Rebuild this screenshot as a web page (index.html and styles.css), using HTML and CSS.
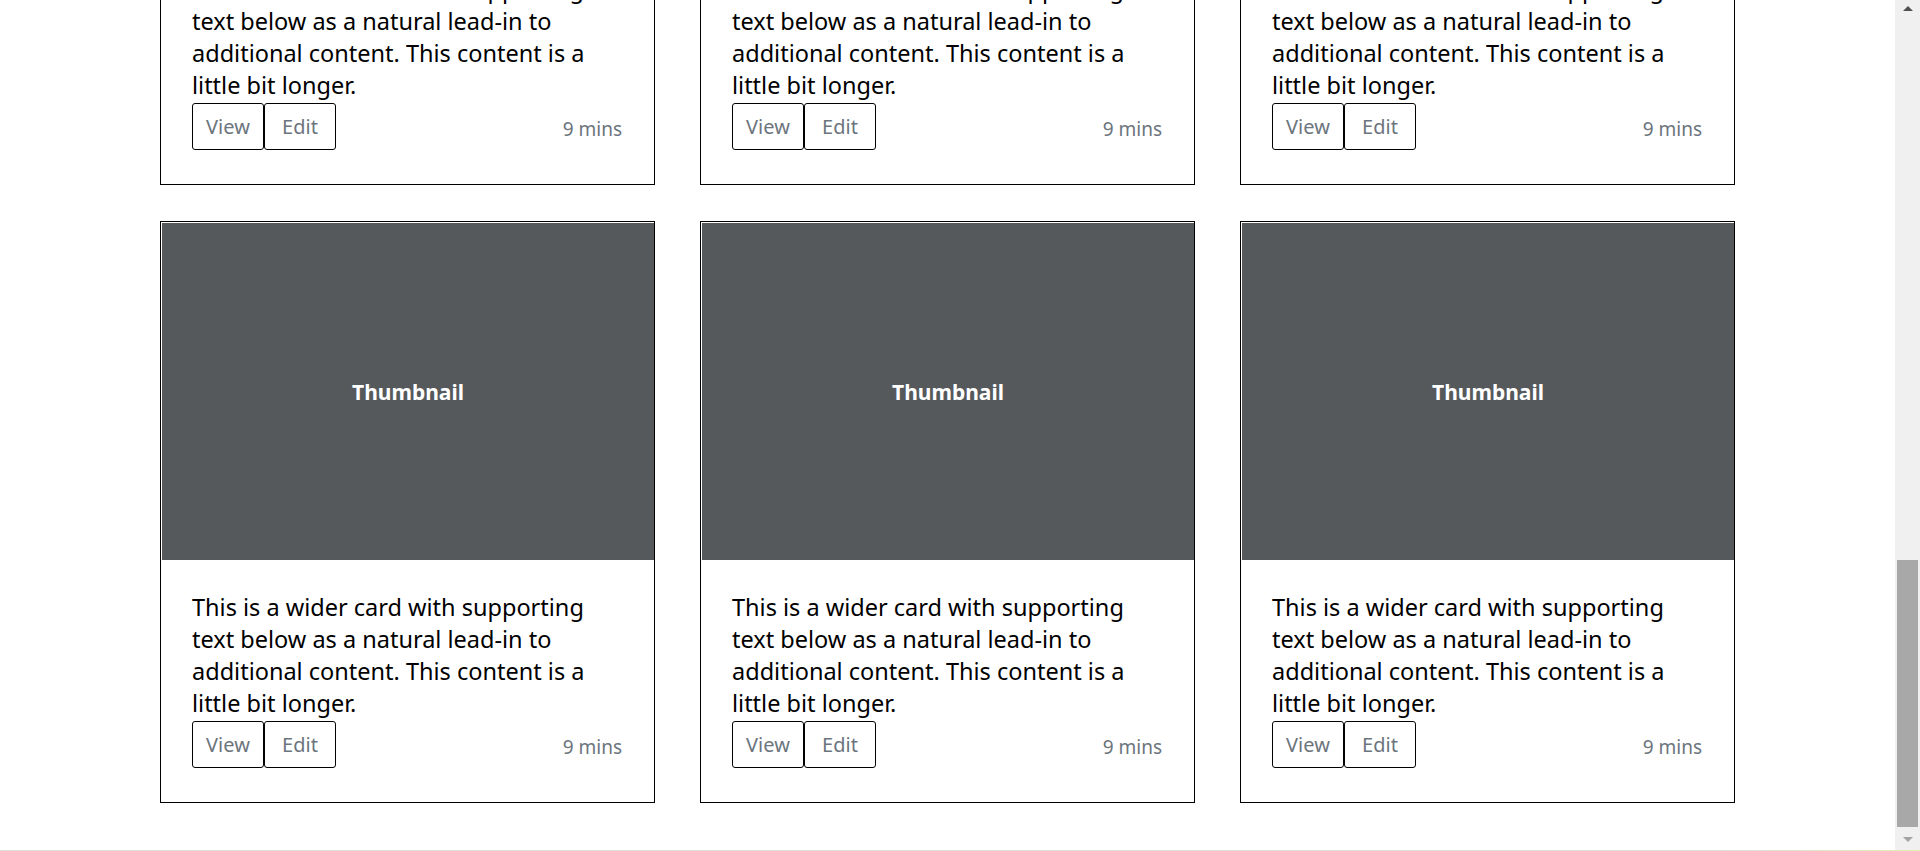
FILE: index.html
```html
<!DOCTYPE html>
<html lang="en">
<head>
<meta charset="utf-8">
<title>Album</title>
<link rel="stylesheet" href="styles.css">
</head>
<body>
<div class="viewport">
  <main class="page">
    <div class="album">
      <div class="card">
        <div class="thumb">Thumbnail</div>
        <div class="card-body">
          <p class="card-text">This is a wider card with supporting text below as a natural lead-in to additional content. This content is a little bit longer.</p>
          <div class="card-foot">
            <div class="btn-group"><button class="btn">View</button><button class="btn">Edit</button></div>
            <small class="muted">9 mins</small>
          </div>
        </div>
      </div>
      <div class="card">
        <div class="thumb">Thumbnail</div>
        <div class="card-body">
          <p class="card-text">This is a wider card with supporting text below as a natural lead-in to additional content. This content is a little bit longer.</p>
          <div class="card-foot">
            <div class="btn-group"><button class="btn">View</button><button class="btn">Edit</button></div>
            <small class="muted">9 mins</small>
          </div>
        </div>
      </div>
      <div class="card">
        <div class="thumb">Thumbnail</div>
        <div class="card-body">
          <p class="card-text">This is a wider card with supporting text below as a natural lead-in to additional content. This content is a little bit longer.</p>
          <div class="card-foot">
            <div class="btn-group"><button class="btn">View</button><button class="btn">Edit</button></div>
            <small class="muted">9 mins</small>
          </div>
        </div>
      </div>
      <div class="card">
        <div class="thumb">Thumbnail</div>
        <div class="card-body">
          <p class="card-text">This is a wider card with supporting text below as a natural lead-in to additional content. This content is a little bit longer.</p>
          <div class="card-foot">
            <div class="btn-group"><button class="btn">View</button><button class="btn">Edit</button></div>
            <small class="muted">9 mins</small>
          </div>
        </div>
      </div>
      <div class="card">
        <div class="thumb">Thumbnail</div>
        <div class="card-body">
          <p class="card-text">This is a wider card with supporting text below as a natural lead-in to additional content. This content is a little bit longer.</p>
          <div class="card-foot">
            <div class="btn-group"><button class="btn">View</button><button class="btn">Edit</button></div>
            <small class="muted">9 mins</small>
          </div>
        </div>
      </div>
      <div class="card">
        <div class="thumb">Thumbnail</div>
        <div class="card-body">
          <p class="card-text">This is a wider card with supporting text below as a natural lead-in to additional content. This content is a little bit longer.</p>
          <div class="card-foot">
            <div class="btn-group"><button class="btn">View</button><button class="btn">Edit</button></div>
            <small class="muted">9 mins</small>
          </div>
        </div>
      </div>
    </div>
  </main>
  <div class="scrollbar" aria-hidden="true">
    <div class="sb-arrow sb-up"></div>
    <div class="sb-track"><div class="sb-thumb"></div></div>
    <div class="sb-arrow sb-down"></div>
  </div>
</div>
<div class="bottom-line"></div>
</body>
</html>
```
FILE: styles.css
```css
* { box-sizing: border-box; }
html, body { margin: 0; padding: 0; background: #fff; overflow: hidden; }
body {
  font-family: "Noto Sans", "Open Sans", sans-serif;
  font-size: 23.5px;
  color: #000;
}
.viewport {
  display: flex;
  height: 850px;
}
.page {
  flex: 1;
  overflow: hidden;
}
.album {
  width: 1575px;
  margin: -397px auto 0;
  display: grid;
  grid-template-columns: repeat(3, 495px);
  column-gap: 45px;
  row-gap: 36px;
}
.card {
  height: 582px;
  border: 1px solid #000;
  display: flex;
  flex-direction: column;
}
.thumb {
  height: 337px;
  margin: 1px 0 0 1px;
  background: #55595c;
  color: #fff;
  font-weight: 700;
  font-size: 21px;
  display: flex;
  align-items: center;
  justify-content: center;
}
.card-body {
  flex: 1;
  padding: 31px 32px 33px 31px;
  display: flex;
  flex-direction: column;
}
.card-text {
  margin: 0;
  line-height: 32px;
}
.card-foot {
  margin-top: 2px;
  display: flex;
  align-items: center;
  justify-content: space-between;
}
.btn-group { display: flex; }
.btn {
  font-family: inherit;
  font-size: 20px;
  color: #6c757d;
  background: #fff;
  border: 1px solid #000;
  border-radius: 3px;
  height: 47px;
  width: 72px;
  padding: 1px 0 0;
  line-height: 1;
}
.muted {
  font-size: 19px;
  color: #6c757d;
  padding-top: 4px;
}
.scrollbar {
  width: 25px;
  background: #f0f0f0;
  display: flex;
  flex-direction: column;
  align-items: center;
}
.sb-arrow { width: 0; height: 0; border-left: 5px solid transparent; border-right: 5px solid transparent; }
.sb-up { margin-top: 6px; border-bottom: 5px solid #505050; }
.sb-down { margin-bottom: 8px; border-top: 5px solid #a3a3a3; }
.sb-track { flex: 1; width: 100%; display: flex; flex-direction: column; justify-content: flex-end; padding: 0 2px 10px; }
.sb-thumb { height: 267px; background: #a8a8a8; }
.bottom-line {
  height: 1px;
  background: linear-gradient(to right, #dfddd8 0%, #dfddd8 90%, #e3efb4 100%);
}
```
